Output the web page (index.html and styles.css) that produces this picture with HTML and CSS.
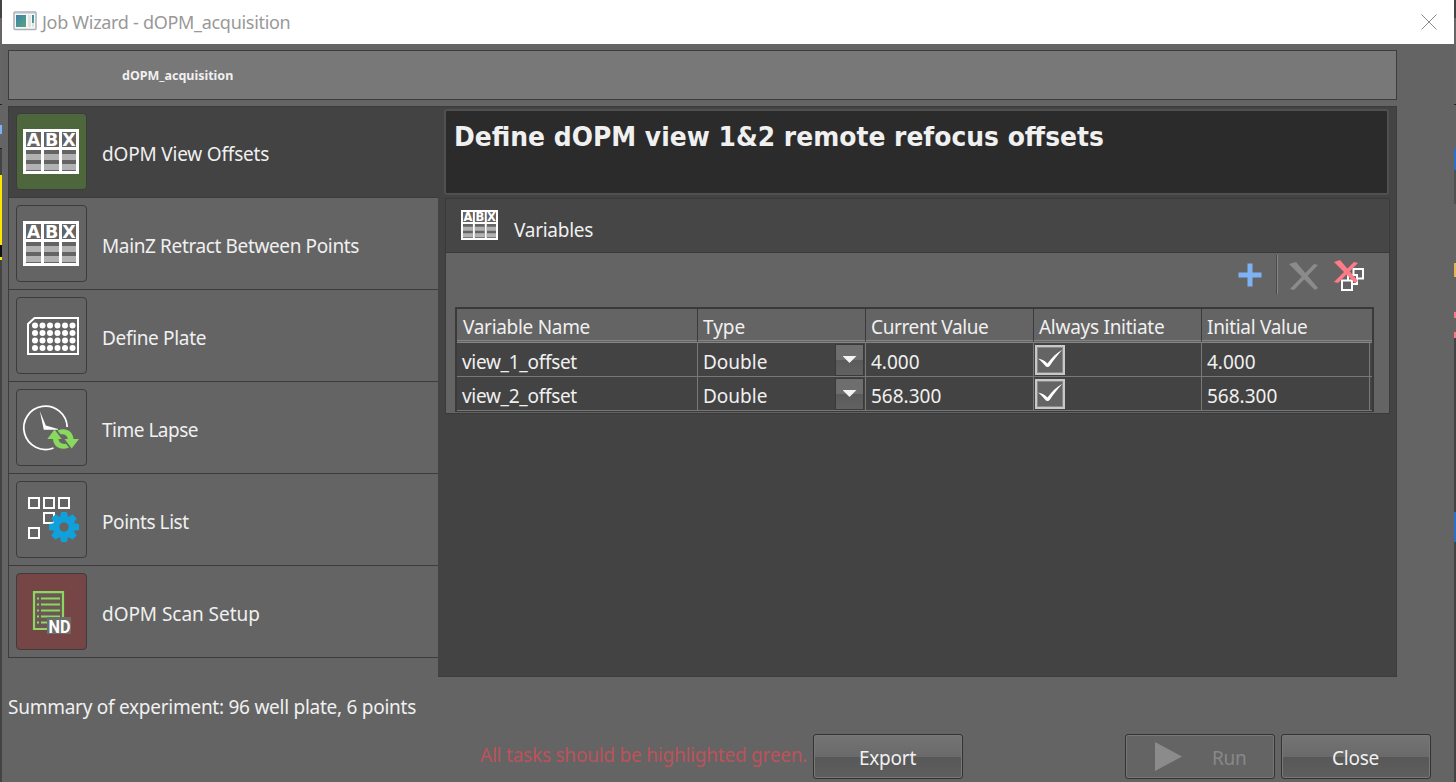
FILE: index.html
```html
<!DOCTYPE html>
<html lang="en">
<head>
<meta charset="utf-8">
<title>Job Wizard - dOPM_acquisition</title>
<link rel="stylesheet" href="styles.css">
</head>
<body>
<div class="screen">
  <div class="edge edge-left"></div>
  <main class="window">
    <header class="titlebar">
      <svg class="app-icon" width="24" height="20" viewBox="0 0 24 20">
        <defs><linearGradient id="g" x1="0" x2="1" y1="0" y2="1"><stop offset="0" stop-color="#3f7fb0"/><stop offset="1" stop-color="#55a878"/></linearGradient></defs>
        <rect x="1" y="1" width="22" height="17.500" rx="1" fill="#f7f7f7" stroke="#a9b1b9" stroke-width="1.500"/>
        <path d="M2 2.500h20" stroke="#d5dbe0"/>
        <rect x="3" y="4" width="10" height="12" fill="url(#g)"/>
        <path d="M15 4h3v12h-3zM19 12h2v4h-2z" fill="#e2e2e2"/><path d="M19 4h2v8h-2z" fill="url(#g)"/>
      </svg>
      <span class="title">Job Wizard - dOPM_acquisition</span>
      <svg class="x" width="16" height="16" viewBox="0 0 16 16"><path d="M.5.500l15 15M15.500.500l-15 15" stroke="#8a8a8a" fill="none"/></svg>
    </header>
    <div class="job-name"><span>dOPM_acquisition</span></div>
    <div class="panel">
      <nav class="tasks">
        <div class="task active"><div class="tile green">
          <svg class="abx" width="56" height="45" viewBox="0 0 56 45"><path fill="#fff" d="M0 0h56v45H0z"/><path fill="#646464" d="M3 3h15v15H3zM21 3h15v15H21zM39 3h14v15H39zM3 21h15v21H3zM21 21h15v21H21zM39 21h14v21H39z"/><path fill="#b2b2b2" d="M3 25h15v6H3zM21 25h15v6H21zM39 25h14v6H39zM3 35h15v6H3zM21 35h15v6H21zM39 35h14v6H39z"/><text x="10.500" y="17">A</text><text x="28.700" y="17">B</text><text x="46" y="17">X</text></svg></div><span class="t1">dOPM View Offsets</span></div>
        <div class="task"><div class="tile">
          <svg class="abx" width="56" height="45" viewBox="0 0 56 45"><path fill="#fff" d="M0 0h56v45H0z"/><path fill="#646464" d="M3 3h15v15H3zM21 3h15v15H21zM39 3h14v15H39zM3 21h15v21H3zM21 21h15v21H21zM39 21h14v21H39z"/><path fill="#b2b2b2" d="M3 25h15v6H3zM21 25h15v6H21zM39 25h14v6H39zM3 35h15v6H3zM21 35h15v6H21zM39 35h14v6H39z"/><text x="10.500" y="17">A</text><text x="28.700" y="17">B</text><text x="46" y="17">X</text></svg></div><span class="t2">MainZ Retract Between Points</span></div>
        <div class="task"><div class="tile plate">
          <svg width="52" height="38" viewBox="0 0 52 38"><path d="M7.500 1H51V37H1V7Z" fill="none" stroke="#fff" stroke-width="2"/>
          <g stroke="#fff" stroke-width="6" stroke-linecap="round" stroke-dasharray="0 7.500"><path d="M8 8.500h38M8 16h38M8 23.500h38M8 31h38"/></g></svg></div><span class="t3">Define Plate</span></div>
        <div class="task"><div class="tile">
          <svg width="56" height="45" viewBox="0 0 56 45"><path d="M30.500 43A21.700 21.700 0 1 1 44.200 22" fill="none" stroke="#fff" stroke-width="1.800"/>
          <path d="M16.800 6L22.800 20.500L35 24V24.800H20.800Z" fill="#fff"/>
          <path fill="#8ad95f" d="M24.300 34L31.500 24.500L38.700 34H35.500C35.800 37.500 39 39.500 43 38.800L46 42.500C38 46 30.500 42 30 34ZM56 34L48.700 43.500L41.500 34H44.800C44.500 30.500 41.500 28.700 37.500 29.300L34.500 25.700C42 22 50 26 50.500 34Z"/></svg></div><span class="t4">Time Lapse</span></div>
        <div class="task"><div class="tile points">
          <svg width="51" height="46" viewBox="0 0 51 46"><path d="M1 1h10v10H1zM16 1h10v10H16zM31 1h10v10H31zM16 16h10v10H16zM1 31h10v10H1z" fill="none" stroke="#fff" stroke-width="2"/>
          <g fill="#10a0dc" transform="translate(36 30)"><circle r="11.200"/><g id="tooth"><path d="M-3-15H3L4-9H-4ZM-3 15H3L4 9H-4ZM-15-3V3L-9 4V-4ZM15-3V3L9 4V-4Z"/></g><use href="#tooth" transform="rotate(45)"/><circle r="4.700" fill="#646464"/></g></svg></div><span class="t5">Points List</span></div>
        <div class="task"><div class="tile red">
          <svg width="40" height="43" viewBox="0 0 40 43"><path d="M2 1.200H31V38H2Z" fill="#646464" fill-opacity=".55" stroke="#8ad95f" stroke-width="2.200"/>
          <path d="M5 7.500h2M9 7.500h19M5 13.500h2M9 13.500h19M5 19.500h2M9 19.500h19M5 25.500h2M9 25.500h19M5 31.500h2M9 31.500h8" stroke="#8ad95f" stroke-width="2"/>
          <path d="M15 26H39V43H15Z" fill="#6c6c68"/><text x="16.500" y="41.500" font-family="Roboto, sans-serif" font-weight="700" font-size="18.500" textLength="22" lengthAdjust="spacingAndGlyphs" fill="#fff">ND</text></svg></div><span class="t6">dOPM Scan Setup</span></div>
      </nav>
      <section class="detail">
        <h1><span>Define dOPM view 1&amp;2 remote refocus offsets</span></h1>
        <div class="variables">
          <div class="variables-head">
            <svg class="abx" width="37" height="30" viewBox="0 0 56 45" preserveAspectRatio="none"><path fill="#fff" d="M0 0h56v45H0z"/><path fill="#646464" d="M3 3h15v15H3zM21 3h15v15H21zM39 3h14v15H39zM3 21h15v21H3zM21 21h15v21H21zM39 21h14v21H39z"/><path fill="#b2b2b2" d="M3 25h15v6H3zM21 25h15v6H21zM39 25h14v6H39zM3 35h15v6H3zM21 35h15v6H21zM39 35h14v6H39z"/><text x="10.500" y="17">A</text><text x="28.700" y="17">B</text><text x="46" y="17">X</text></svg><span>Variables</span></div>
          <div class="tools">
            <svg width="24" height="24" viewBox="0 0 24 24"><path d="M9.500.500h5v9h9v5h-9v9h-5v-9h-9v-5h9z" fill="#7fb2f5"/></svg>
            <i></i>
            <svg class="del" width="30" height="28" viewBox="0 0 30 28"><path d="M0 2L7 0L29 26L26 28ZM25 2L29 3L5 28L1 27Z" fill="#8b8b8b"/></svg>
            <svg class="delall" width="31" height="31" viewBox="0 0 31 31"><g fill="#646464" stroke="#fff" stroke-width="2"><path d="M19.500 9h9.500v9.500H19.500z"/><path d="M14 15h9v9h-9z"/><path d="M8 20.500h10v9.500h-10z"/></g><path d="M0 2L6 0L24 21L21 23ZM20 2L24 3L4 23L0 22Z" fill="#ff7b88"/></svg>
          </div>
          <table>
            <colgroup><col class="c1"><col class="c2"><col class="c2"><col class="c2"><col class="c2"><col class="c3"></colgroup>
            <thead><tr><th class="first"><span class="h1">Variable Name</span></th><th><span class="h2">Type</span></th><th><span class="h3">Current Value</span></th><th><span class="h4">Always Initiate</span></th><th colspan="2"><span class="h5">Initial Value</span></th></tr></thead>
            <tbody>
              <tr><td><span class="vn">view_1_offset</span></td><td class="type"><div><span>Double</span><b></b></div></td><td><span class="num">4.000</span></td><td class="chk"><svg width="30" height="30" viewBox="2 2 26 26"><path d="M3 13.500C7 14 10 16 12.500 18.500C17 12.500 21.500 8 27.300 4.800C22.500 10 18.500 15.500 15 20.500Q12.500 23.500 10 20.500C8 18 6 16 3 13.500Z" fill="#fff"/></svg></td><td><span class="num">4.000</span></td><td></td></tr>
              <tr><td><span class="vn">view_2_offset</span></td><td class="type"><div><span>Double</span><b></b></div></td><td><span class="num">568.300</span></td><td class="chk"><svg width="30" height="30" viewBox="2 2 26 26"><path d="M3 13.500C7 14 10 16 12.500 18.500C17 12.500 21.500 8 27.300 4.800C22.500 10 18.500 15.500 15 20.500Q12.500 23.500 10 20.500C8 18 6 16 3 13.500Z" fill="#fff"/></svg></td><td><span class="num">568.300</span></td><td></td></tr>
            </tbody>
          </table>
        </div>
      </section>
    </div>
    <p class="summary"><span>Summary of experiment: 96 well plate, 6 points</span></p>
    <footer>
      <span class="warn">All tasks should be highlighted green.</span>
      <button class="export">Export</button>
      <button class="run" disabled><svg width="27" height="29" viewBox="0 0 27 29"><path d="M0 0L27 14.500L0 29Z" fill="#8b8b8b"/></svg><span>Run</span></button>
      <button class="close">Close</button>
    </footer>
  </main>
  <div class="edge edge-right"></div>
</div>
</body>
</html>
```
FILE: styles.css
```css
* { box-sizing: border-box; }
body { margin: 0; font-family: "Noto Sans", "Open Sans", sans-serif; font-size: 19px; color: #f0f0f0; background: #646464; overflow: hidden; }
.screen { display: flex; width: 1456px; height: 782px; }
.edge { width: 2px; flex: none; }
.edge-left { background: linear-gradient(#444 0 18px, #666 18px 104px, #222 104px 105px, #646464 105px 125px, #7fb2f5 125px 134px, #646464 134px 148px, #222 148px 149px, #444 149px 175px, #ffe600 175px 245px, #111 245px 257px, #ffe600 257px 260px, #444 260px); }
.edge-right { background: linear-gradient(#444 0 18px, #666 18px 104px, #222 104px 105px, #646464 105px 148px, #2c6fc5 148px 170px, #505050 170px 204px, #646464 204px 263px, #e3b55c 263px 277px, #646464 277px 312px, #f77984 312px 318px, #646464 318px 332px, #f77984 332px 338px, #444 338px 512px, #2c6fc5 512px 542px, #444 542px); }
.window { width: 1452px; height: 782px; background: #646464; white-space: nowrap; }
.titlebar { height: 44px; background: #fff; display: flex; padding: 11px 17px 0 11px; color: #999; }
.title { margin: -1px 0 0 5px; font-size: 18px; line-height: 24px; letter-spacing: -.3px; }
.x { margin: 3px 0 0 auto; }
.tile svg { overflow: visible; }
.abx text { fill: #fff; font: 700 17.500px "DejaVu Sans", sans-serif; text-anchor: middle; }
.job-name { margin: 6px 0 0 6px; width: 1389px; height: 50px; border: 1px solid #3c3c3c; background: #787878; padding-left: 113px; font-size: 12.500px; font-weight: 700; line-height: 50px; }
.panel { display: flex; margin: 6px 0 0 6px; width: 1389px; height: 571px; }
.tasks { width: 430px; }
.task { height: 92px; border-bottom: 1px solid #3c3c3c; border-left: 1px solid #3c3c3c; display: flex; padding: 7px 0 0 7px; }
.active { border-top: 1px solid #3c3c3c; background: #434343; padding-top: 6px; }
.tile { width: 71px; height: 77px; border: 1px solid #3c3c3c; border-radius: 4px; padding: 15px 0 0 6px; }
.green { background: #4d663c; }
.red { background: #764545; padding: 17px 0 0 15px; }
.plate { padding: 19px 0 0 10px; }
.points { padding: 15px 0 0 11px; }
.task > span { margin-left: 15px; line-height: 26px; margin-top: 28px; }
.task > .t1 { letter-spacing: -.19px; }
.task > .t2 { letter-spacing: -.37px; }
.task > .t3 { letter-spacing: -.33px; }
.task > .t4 { letter-spacing: -.5px; }
.task > .t5 { letter-spacing: -.42px; }
.task > .t6 { letter-spacing: -.05px; }
.detail { flex: 1; background: #434343; border: 1px solid #3c3c3c; border-left: 0; padding: 2px 6px 0 7px; }
h1 { margin: 0 0 3px -1px; width: 945px; height: 86px; border: 2px solid #505050; border-radius: 3px; background: #2b2b2b; padding: 8px 0 0 8px; font: 700 26.500px/36px "DejaVu Sans", sans-serif; }
h1 span { display: inline-block; transform: scaleX(.944); transform-origin: 0 0; }
.variables { width: 945px; height: 216px; border: 1px solid #3a3a3a; background: #646464; }
.variables-head { height: 54px; background: #464646; border-bottom: 1px solid #3a3a3a; display: flex; padding: 11px 0 0 15px; }
.variables-head span { margin-left: 16px; margin-top: 7px; line-height: 26px; letter-spacing: -.27px; }
.tools { height: 54px; display: flex; padding-left: 792px; }
.tools svg:first-child { margin-top: 10px; }
.tools i { width: 2px; height: 39px; margin: 2px 0 0 14px; background: linear-gradient(90deg, #4a4a4a 50%, #858585 50%); }
.del { margin: 9px 0 0 11px; }
.delall { margin: 7px 0 0 15px; }
table { margin-left: 9px; width: 919px; height: 105px; border: 2px solid #3a3a3a; border-bottom-width: 1px; border-collapse: separate; border-spacing: 0; table-layout: fixed; background: #434343; }
.c1 { width: 241px; } .c2 { width: 168px; } .c3 { width: 2px; }
th, td { padding: 0 0 0 5px; text-align: left; font-weight: 400; line-height: 26px; vertical-align: top; border-right: 1px solid #787878; border-bottom: 1px solid #787878; }
th { height: 34px; background: #646464; border-right-color: #3a3a3a; border-bottom: 3px double #858585; padding-top: 5px; }
.first { padding-left: 6px; }
th:last-child, td:last-child { border-right: 0; padding: 0; }
th:last-child { padding: 5px 0 0 5px; }
td { height: 34px; padding-top: 6px; }
.h1 { letter-spacing: -.3px; }
.h3 { letter-spacing: -.38px; }
.h4 { letter-spacing: -.27px; }
.h5 { letter-spacing: -.3px; }
.vn { letter-spacing: -.3px; }
.type > div { display: flex; justify-content: space-between; margin-top: -5px; height: 32px; padding-right: 1px; }
.type > div span { margin-top: 5px; }
.type b { width: 29px; height: 32px; border: 1px solid #3a3a3a; background: linear-gradient(#6e6e6e 50%, #5a5a5a 50%, #626262); display: flex; justify-content: center; padding-top: 11px; }
.type b::after { content: ""; width: 14px; height: 7px; background: #f4f4f4; clip-path: polygon(0 0, 100% 0, 50% 100%); }
.chk { padding: 2px 0 0 1px; }
.chk svg { display: block; background: #646464; border: 2px solid #c8c8c8; outline: 1px solid #8a8a8a; outline-offset: -3px; }
.summary { margin: 17px 0 0 6px; line-height: 26px; letter-spacing: -.26px; }
footer { display: flex; height: 45px; margin-top: 14px; }
.warn { width: 333px; margin: 8px 0 0 478px; line-height: 26px; color: #bd525b; flex: none; letter-spacing: -.22px; }
button { width: 150px; height: 45px; flex: none; border: 1px solid #333; border-radius: 3px; box-shadow: inset 0 0 0 1px #787878; background: linear-gradient(#747474, #6a6a6a 50%, #585858 50%, #5e5e5e); font: inherit; color: #f0f0f0; padding: 2px 1px 0 0; letter-spacing: -.25px; }
.run { background: #646464; color: #888; margin-left: 162px; display: flex; align-items: center; padding: 0 0 0 29px; }
.run span { margin: 2px 0 0 30px; }
.run svg { margin-top: -1px; }
.close { margin-left: 6px; }
```
